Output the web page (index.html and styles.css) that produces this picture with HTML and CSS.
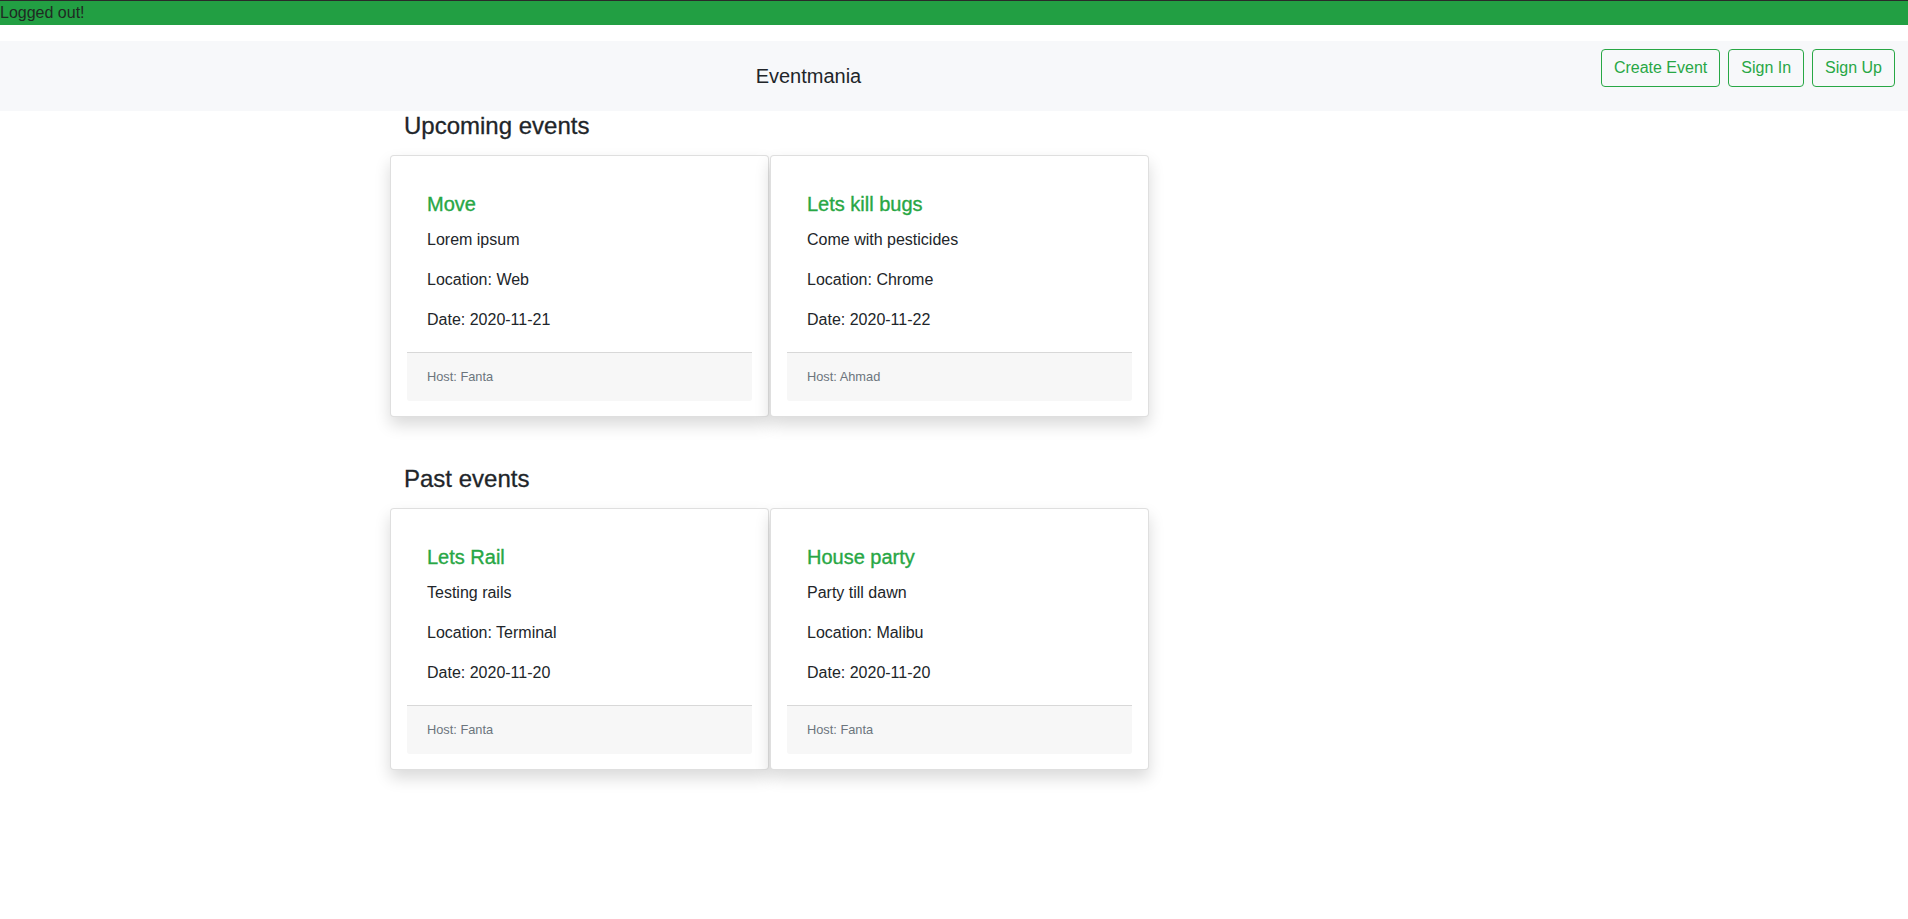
FILE: index.html
```html
<!DOCTYPE html>
<html lang="en">
<head>
<meta charset="utf-8">
<title>Eventmania</title>
<link rel="stylesheet" href="styles.css">
</head>
<body>
<div class="flash">Logged out!</div>
<nav class="navbar">
  <a class="brand" href="#">Eventmania</a>
  <div class="nav-actions">
    <a class="btn" href="#">Create Event</a>
    <a class="btn" href="#">Sign In</a>
    <a class="btn" href="#">Sign Up</a>
  </div>
</nav>
<main class="container">
  <section class="section">
    <h4 class="section-title">Upcoming events</h4>
    <div class="cards">
      <div class="card">
        <div class="card-body">
          <h5 class="card-title">Move</h5>
          <p class="card-text">Lorem ipsum</p>
          <p class="card-text">Location: Web</p>
          <p class="card-text">Date: 2020-11-21</p>
        </div>
        <div class="card-footer">Host: Fanta</div>
      </div>
      <div class="card">
        <div class="card-body">
          <h5 class="card-title">Lets kill bugs</h5>
          <p class="card-text">Come with pesticides</p>
          <p class="card-text">Location: Chrome</p>
          <p class="card-text">Date: 2020-11-22</p>
        </div>
        <div class="card-footer">Host: Ahmad</div>
      </div>
    </div>
  </section>
  <section class="section">
    <h4 class="section-title">Past events</h4>
    <div class="cards">
      <div class="card">
        <div class="card-body">
          <h5 class="card-title">Lets Rail</h5>
          <p class="card-text">Testing rails</p>
          <p class="card-text">Location: Terminal</p>
          <p class="card-text">Date: 2020-11-20</p>
        </div>
        <div class="card-footer">Host: Fanta</div>
      </div>
      <div class="card">
        <div class="card-body">
          <h5 class="card-title">House party</h5>
          <p class="card-text">Party till dawn</p>
          <p class="card-text">Location: Malibu</p>
          <p class="card-text">Date: 2020-11-20</p>
        </div>
        <div class="card-footer">Host: Fanta</div>
      </div>
    </div>
  </section>
</main>
</body>
</html>
```

FILE: styles.css
```css
* { box-sizing: border-box; }

body {
  margin: 0;
  font-family: "Liberation Sans", Arial, sans-serif;
  font-size: 16px;
  line-height: 1.5;
  color: #212529;
  background: #fff;
}

.flash {
  background: #229f43;
  border-top: 1px solid #2a2a2a;
  color: #1f2a22;
  line-height: 24px;
  margin-bottom: 16px;
}

.navbar {
  display: flex;
  align-items: center;
  background: #f7f8fa;
  padding: 8px 13px 8px 16px;
  height: 70px;
}

.brand {
  margin: 0 auto;
  font-size: 20px;
  line-height: 30px;
  padding: 5px 0;
  color: #212529;
  text-decoration: none;
}

.nav-actions {
  display: flex;
  gap: 8px;
  margin-bottom: 16px;
}

.btn {
  display: inline-block;
  border: 1px solid #28a745;
  border-radius: 4px;
  padding: 6px 12px;
  line-height: 24px;
  font-size: 16px;
  color: #28a745;
  text-decoration: none;
}

.container {
  width: 1128px;
  margin: 0 auto;
}

.section { margin-bottom: 47px; }

.section-title {
  margin: 0 0 15px;
  padding-left: 14px;
  height: 29px;
  font-size: 24px;
  font-weight: 500;
  line-height: 29px;
  color: #212529;
  -webkit-text-stroke: 0.3px currentColor;
}

.cards {
  display: grid;
  grid-template-columns: 379px 379px;
  gap: 1px;
}

.card {
  background: #fff;
  border: 1px solid rgba(0, 0, 0, 0.125);
  border-radius: 4px;
  padding: 16px 16px 15px;
  box-shadow: 0 8px 16px rgba(0, 0, 0, 0.15);
}

.card-body {
  padding: 20px;
}

.card-title {
  margin: 0 0 12px;
  font-size: 20px;
  font-weight: 500;
  line-height: 24px;
  height: 24px;
  color: #28a745;
  -webkit-text-stroke: 0.35px currentColor;
}

.card-text {
  margin: 0 0 16px;
  line-height: 24px;
  height: 24px;
}

.card-text:last-child { margin-bottom: 0; }

.card-footer {
  background: #f7f7f7;
  border-top: 1px solid rgba(0, 0, 0, 0.125);
  border-radius: 0 0 3px 3px;
  padding: 12px 20px;
  height: 49px;
  font-size: 12.8px;
  line-height: 24px;
  color: #6c757d;
}
```
